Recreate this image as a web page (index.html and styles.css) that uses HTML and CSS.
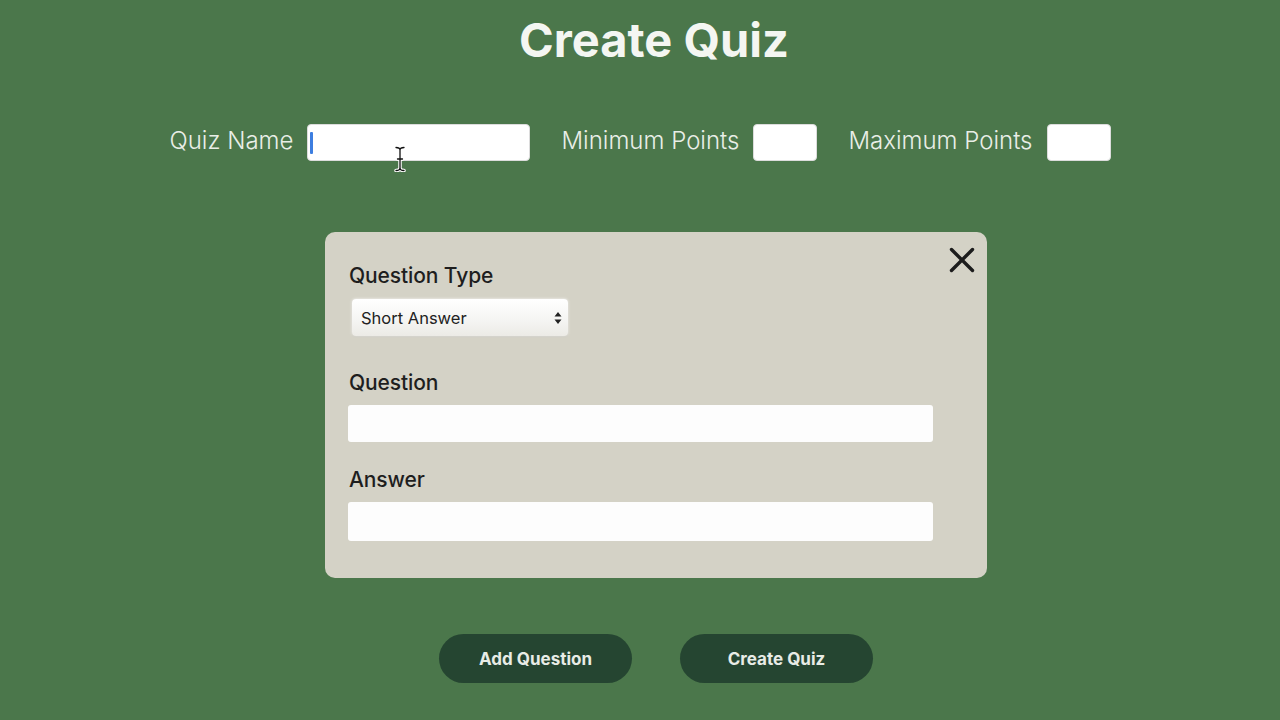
FILE: index.html
```html
<!DOCTYPE html>
<html lang="en">
<head>
<meta charset="utf-8">
<title>Create Quiz</title>
<link rel="stylesheet" href="styles.css">
</head>
<body>
  <h1 class="title">Create Quiz</h1>
  <div class="meta-row">
    <label class="meta-label" for="qname">Quiz Name</label>
    <span class="input-wrap">
      <input id="qname" class="meta-input name-input" type="text">
      <span class="caret"></span>
      <svg class="ibeam" width="14" height="26" viewBox="0 0 14 26">
        <path d="M3 1.5 Q7 1.5 7 4 Q7 1.5 11 1.5 M7 4 V22 Q7 24.5 3 24.5 M7 22 Q7 24.5 11 24.5 M4.5 13 H9.5" fill="none" stroke="#fff" stroke-width="3.5" stroke-linecap="round"/>
        <path d="M3 1.5 Q7 1.5 7 4 Q7 1.5 11 1.5 M7 4 V22 Q7 24.5 3 24.5 M7 22 Q7 24.5 11 24.5 M4.5 13 H9.5" fill="none" stroke="#111" stroke-width="1.3" stroke-linecap="round"/>
      </svg>
    </span>
    <label class="meta-label" for="minp">Minimum Points</label>
    <input id="minp" class="meta-input small-input" type="text">
    <label class="meta-label" for="maxp">Maximum Points</label>
    <input id="maxp" class="meta-input small-input" type="text">
  </div>

  <main class="main">
    <section class="card">
      <button class="close" aria-label="Close">
        <svg width="26" height="26" viewBox="0 0 26 26"><path d="M2.5 2.5 L23.5 23.5 M23.5 2.5 L2.5 23.5" stroke="#1c1c1c" stroke-width="3.4" stroke-linecap="round"/></svg>
      </button>
      <div class="field-label">Question Type</div>
      <div class="select">
        <span class="select-text">Short Answer</span>
        <svg class="select-arrows" width="8" height="14" viewBox="0 0 8 14"><path d="M4 1 L7.5 5.5 H0.5 Z M4 13 L7.5 8.5 H0.5 Z" fill="#222"/></svg>
      </div>
      <div class="field-label q-label">Question</div>
      <input class="wide-input" type="text">
      <div class="field-label a-label">Answer</div>
      <input class="wide-input" type="text">
    </section>

    <div class="actions">
      <button class="btn">Add Question</button>
      <button class="btn">Create Quiz</button>
    </div>
  </main>
</body>
</html>
```

FILE: styles.css
```css
* { box-sizing: border-box; }
html, body { margin: 0; }
body {
  background: #4b774b;
  font-family: Inter, Roboto, "Liberation Sans", Arial, sans-serif;
  width: 1280px;
  height: 720px;
  overflow: hidden;
}
.title {
  margin: 12px 0 0;
  padding-left: 28px;
  text-align: center;
  color: #f4f6f2;
  font-size: 47px;
  font-weight: 700;
  line-height: 56px;
}
.meta-row {
  margin-top: 56px;
  display: flex;
  justify-content: center;
  align-items: center;
  height: 37px;
}
.meta-label {
  color: #e9eee7;
  font-size: 24px;
  font-weight: 300;
  margin-right: 14px;
  position: relative;
  top: -2px;
}
.meta-input {
  height: 37px;
  border: 1px solid #dcdcdc;
  border-radius: 4px;
  background: #fff;
  padding: 0;
  outline: none;
}
.input-wrap {
  position: relative;
  display: block;
  margin-right: 31px;
}
.name-input { width: 223px; display: block; }
.caret {
  position: absolute;
  left: 3px;
  top: 8px;
  width: 3px;
  height: 22px;
  background: #3d7ee0;
  border-radius: 1px;
}
.ibeam {
  position: absolute;
  left: 86px;
  top: 22px;
}
.small-input { width: 64px; margin-right: 31px; }
.small-input:last-child { margin-right: 0; }

.main {
  padding-left: 32px;
  margin-top: 71px;
  display: flex;
  flex-direction: column;
  align-items: center;
}
.card {
  position: relative;
  width: 662px;
  height: 346px;
  background: #d4d2c6;
  border-radius: 10px;
  padding: 32px 54px 0 23px;
}
.close {
  position: absolute;
  top: 15px;
  right: 12px;
  width: 26px;
  height: 26px;
  padding: 0;
  border: 0;
  background: transparent;
}
.close svg { display: block; }
.field-label {
  color: #1e1e1e;
  font-size: 21px;
  font-weight: 500;
  line-height: 24px;
  margin-left: 1px;
  letter-spacing: -0.1px;
}
.select {
  margin: 11px 0 0 4px;
  width: 216px;
  height: 37px;
  display: flex;
  align-items: center;
  justify-content: space-between;
  padding: 0 6px 0 9px;
  border-radius: 4px;
  background: linear-gradient(#ffffff, #f4f4f2 60%, #ecebe6);
  box-shadow: 0 0 3px rgba(255,255,255,0.9), 0 1px 2px rgba(0,0,0,0.12);
}
.select-text {
  font-size: 16.5px;
  color: #222;
}
.q-label { margin-top: 35px; }
.a-label { margin-top: 26px; }
.wide-input {
  display: block;
  width: 585px;
  height: 37px;
  margin-top: 10px;
  border: 0;
  border-radius: 3px;
  background: #fdfdfd;
  outline: none;
}
.a-label + .wide-input { height: 39px; }

.actions {
  margin-top: 56px;
  display: flex;
  gap: 48px;
}
.btn {
  width: 193px;
  height: 49px;
  border: 0;
  border-radius: 25px;
  background: #254531;
  color: #e8ece6;
  font-family: Inter, Roboto, "Liberation Sans", Arial, sans-serif;
  font-size: 17px;
  font-weight: 700;
}
```
